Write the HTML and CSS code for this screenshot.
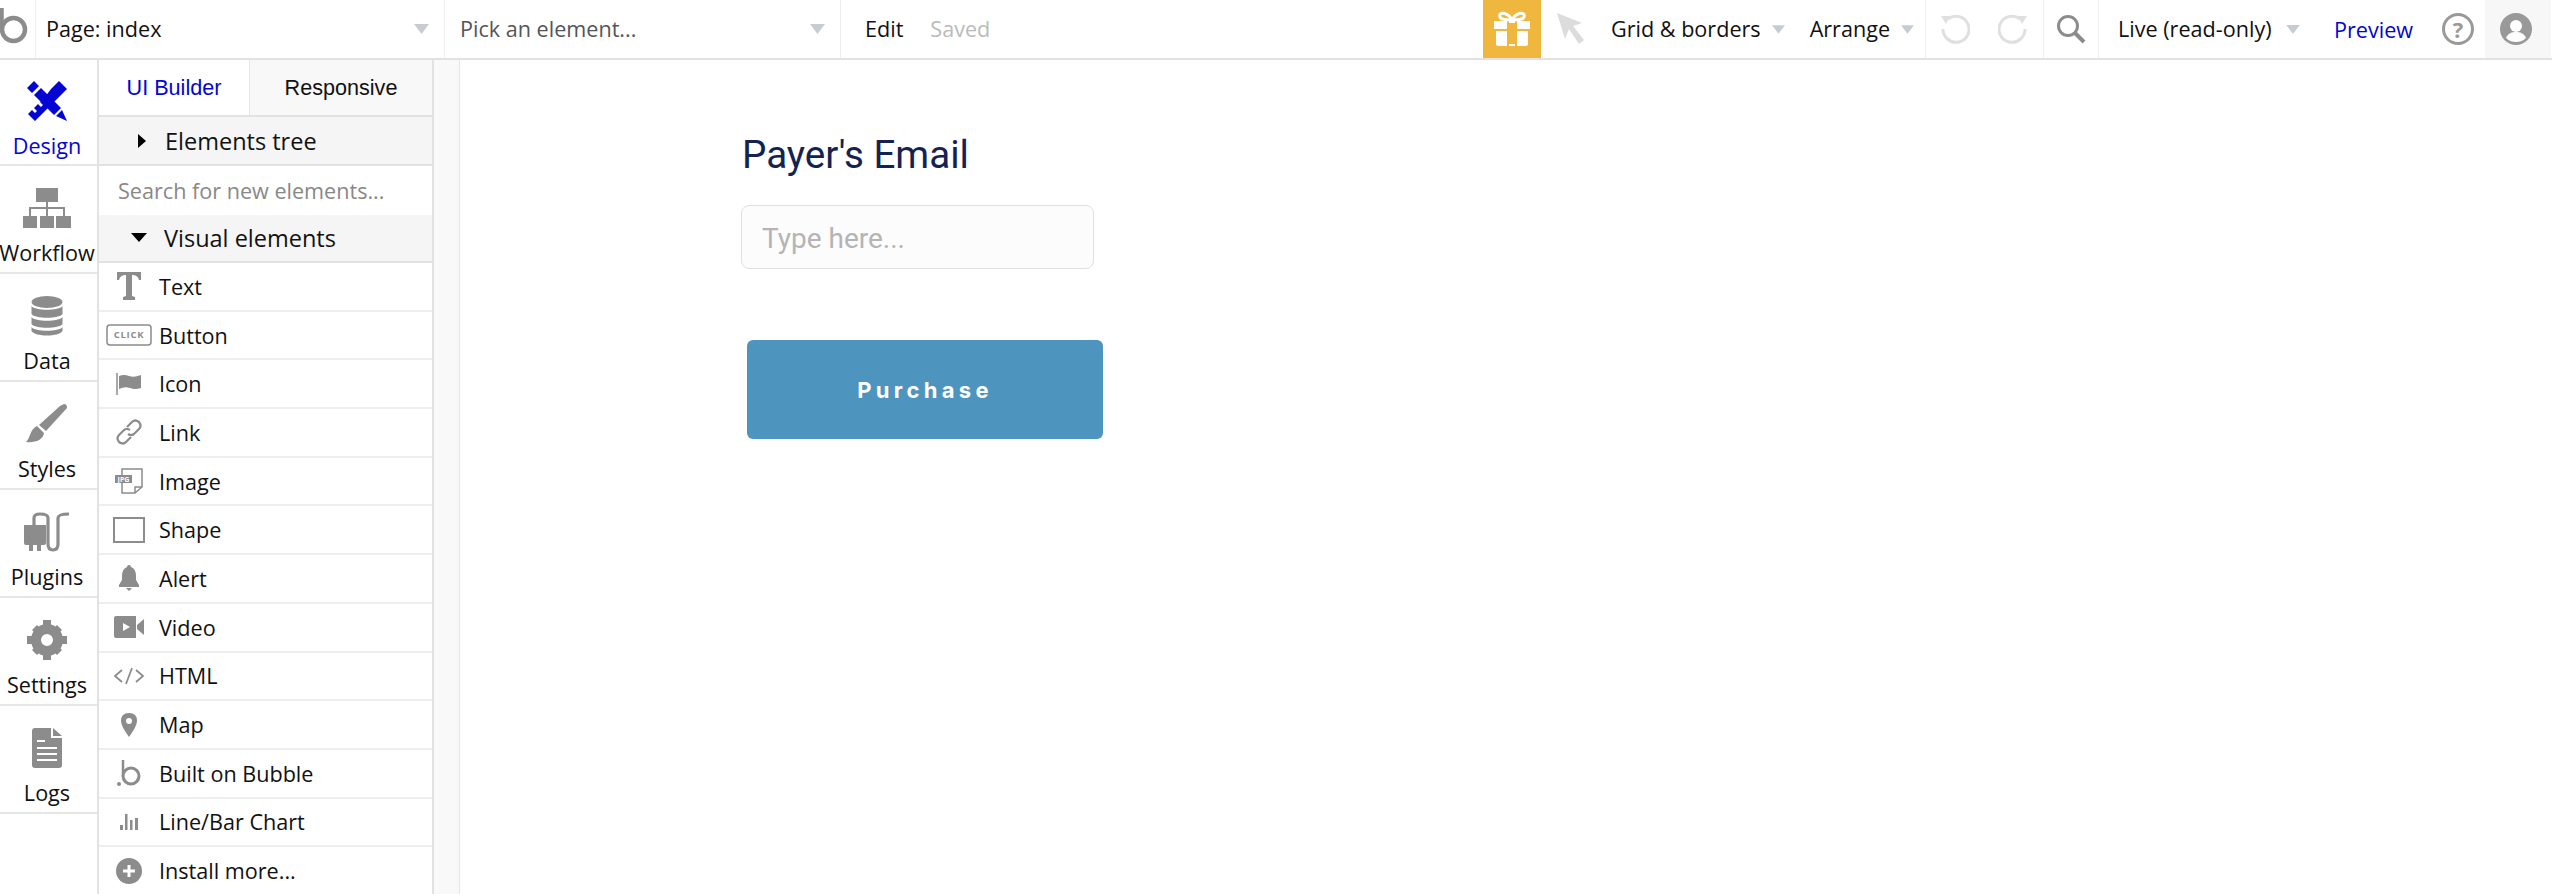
FILE: index.html
```html
<!DOCTYPE html>
<html lang="en">
<head>
<meta charset="utf-8">
<title>Bubble editor</title>
<link rel="stylesheet" href="styles.css">
</head>
<body>
<header class="topbar">
  <div class="tb-logo">
    <svg class="logo-svg" width="35" height="58" viewBox="0 0 35 58"><path d="M1.500 8V30" stroke="#8c8c8c" stroke-width="4.500" fill="none"/><circle cx="13.500" cy="29.5" r="11.500" fill="none" stroke="#8c8c8c" stroke-width="4.500"/></svg>
  </div>
  <div class="tb-sec tb-page"><span>Page: index</span><svg class="caret" width="15" height="10" viewBox="0 0 15 10"><path d="M0 0H15L7.500 10Z"/></svg></div>
  <div class="tb-sec tb-pick"><span>Pick an element...</span><svg class="caret" width="15" height="10" viewBox="0 0 15 10"><path d="M0 0H15L7.500 10Z"/></svg></div>
  <div class="tb-edit"><span>Edit</span><span class="saved">Saved</span></div>
  <div class="tb-gift">
    <svg width="38" height="36" viewBox="0 0 38 36"><path d="M19 9C15 1 5 0 7 6C8 9 13 9 19 9C25 9 30 9 31 6C33 0 23 1 19 9Z" fill="none" stroke="#fff" stroke-width="3"/><path d="M1 10H14V18H1ZM24 10H37V18H24ZM3 20H14V35H5Q3 35 3 33ZM24 20H35V33Q35 35 33 35H24ZM16 10H22V12H16ZM16 33H22V35H16Z" fill="#fff"/></svg>
  </div>
  <div class="tb-tools">
    <svg class="tool-arrow" width="28" height="32" viewBox="0 0 28 32"><path d="M0 0L25 10L16 13L27 27L22 31L12 16L8 26Z" fill="#dcdcdc"/></svg>
    <span class="tool-a">Grid &amp; borders</span><svg class="caret c-a" width="13" height="9" viewBox="0 0 15 10"><path d="M0 0H15L7.500 10Z"/></svg>
    <span class="tool-b">Arrange</span><svg class="caret c-b" width="13" height="9" viewBox="0 0 15 10"><path d="M0 0H15L7.500 10Z"/></svg>
  </div>
  <div class="tb-history">
    <svg width="30" height="30" viewBox="0 0 30 30"><path d="M8 5A13 13 0 1 1 3 15" fill="none" stroke="#dfdfdf" stroke-width="3"/><path d="M1 2L10 2L6 10Z" fill="#dfdfdf"/></svg>
    <svg width="30" height="30" viewBox="0 0 30 30"><path d="M22 5A13 13 0 1 0 27 15" fill="none" stroke="#dfdfdf" stroke-width="3"/><path d="M29 2L20 2L24 10Z" fill="#dfdfdf"/></svg>
  </div>
  <div class="tb-search">
    <svg width="30" height="30" viewBox="0 0 30 30"><circle cx="12" cy="12" r="9.500" fill="none" stroke="#8c8c8c" stroke-width="3"/><path d="M18.500 18.500L28 28" stroke="#8c8c8c" stroke-width="4"/></svg>
  </div>
  <div class="tb-live"><span>Live (read-only)</span><svg class="caret" width="14" height="9" viewBox="0 0 15 10"><path d="M0 0H15L7.500 10Z"/></svg></div>
  <div class="tb-preview">Preview</div>
  <div class="tb-help"><span>?</span></div>
  <div class="tb-user">
    <svg width="32" height="32" viewBox="0 0 32 32"><circle cx="16" cy="16" r="16" fill="#999"/><circle cx="16" cy="13" r="6" fill="#fff"/><path d="M6 25C8 20 12 19 16 19C20 19 24 20 26 25C23 28 19 29 16 29C13 29 9 28 6 25Z" fill="#fff"/></svg>
  </div>
</header>
<main class="body">
  <nav class="rail">
    <div class="rail-item active">
      <div class="rail-icon"><svg width="40" height="40" viewBox="0 0 40 40" fill="#0205d3"><path d="M0 7L7 0L12 5L5 12ZM7 14L14 7L34 27L27 34ZM29 35L35 29L40 40Z"/><path d="M32 0L40 8L8 40L1 33L5 29L8 32L10 30L7 27L11 23L14 26L16 24L13 21L18 16L24 8Z"/></svg></div>
      <span>Design</span>
    </div>
    <div class="rail-item">
      <div class="rail-icon"><svg width="48" height="40" viewBox="0 0 48 40"><path d="M13 0H35V14H13ZM0 28H14V40H0ZM17 28H31V40H17ZM33 28H48V40H33Z" fill="#8c8c8c"/><path d="M24 14V28M7 28V20H41V28" fill="none" stroke="#8c8c8c" stroke-width="2"/></svg></div>
      <span>Workflow</span>
    </div>
    <div class="rail-item">
      <div class="rail-icon"><svg width="32" height="40" viewBox="0 0 32 40" fill="#8c8c8c"><ellipse cx="16" cy="6" rx="15.500" ry="6"/><path d="M0.500 10C4 15 28 15 31.500 10V18C28 23 4 23 0.500 18ZM0.500 21C4 26 28 26 31.500 21V28C28 33 4 33 0.500 28ZM0.500 31C4 36 28 36 31.500 31V35C28 41 4 41 0.500 35Z"/></svg></div>
      <span>Data</span>
    </div>
    <div class="rail-item">
      <div class="rail-icon"><svg width="42" height="40" viewBox="0 0 42 40" fill="#8c8c8c"><path d="M38 0Q41 0 41 4L20 27L13 21L34 2Z"/><path d="M11 22L18 29C17 36 9 39 0 38C4 35 4 25 11 22Z"/></svg></div>
      <span>Styles</span>
    </div>
    <div class="rail-item">
      <div class="rail-icon"><svg width="46" height="40" viewBox="0 0 46 40"><path d="M0 13H22V31Q22 33 20 33H17V39H13V33H9V39H5V33H2Q0 33 0 31Z" fill="#8c8c8c"/><path d="M10 13V6Q10 2 16 2Q24 2 24 6V32Q24 38 29 38Q34 38 34 32V6Q34 2 45 2" fill="none" stroke="#8c8c8c" stroke-width="3.200"/></svg></div>
      <span>Plugins</span>
    </div>
    <div class="rail-item">
      <div class="rail-icon"><svg width="40" height="40" viewBox="0 0 40 40"><circle cx="20" cy="20" r="11" fill="none" stroke="#8c8c8c" stroke-width="10"/><path d="M16 0H24V6H16ZM16 34H24V40H16ZM0 16H6V24H0ZM34 16H40V24H34ZM5 10L10 5L14 9L9 14ZM30 5L35 10L31 14L26 9ZM5 30L10 35L14 31L9 26ZM30 35L35 30L31 26L26 31Z" fill="#8c8c8c"/></svg></div>
      <span>Settings</span>
    </div>
    <div class="rail-item">
      <div class="rail-icon"><svg width="30" height="40" viewBox="0 0 30 40"><path d="M3 0H19V10H30V37Q30 40 27 40H3Q0 40 0 37V3Q0 0 3 0ZM21 0L30 8H21Z" fill="#8c8c8c"/><path d="M5 13H13M5 20H25M5 26H25M5 32H25" stroke="#fff" stroke-width="2"/></svg></div>
      <span>Logs</span>
    </div>
  </nav>
  <aside class="panel">
    <div class="tabs"><div class="tab on">UI Builder</div><div class="tab off">Responsive</div></div>
    <div class="sec-head tree"><svg width="10" height="14" viewBox="0 0 10 14"><path d="M1 0L9 7L1 14Z"/></svg><span>Elements tree</span></div>
    <div class="search">Search for new elements...</div>
    <div class="sec-head visual"><svg width="16" height="10" viewBox="0 0 16 10"><path d="M0 0H16L8 9Z"/></svg><span>Visual elements</span></div>
    <ul class="list">
      <li><span class="ic"><svg width="24" height="28" viewBox="0 0 24 28"><path d="M0 0H24V8H22Q21 3 15 3V24L18 25V28H6V25L9 24V3Q3 3 2 8H0Z" fill="#8c8c8c"/></svg></span>Text</li>
      <li><span class="ic"><svg width="46" height="22" viewBox="0 0 46 22"><rect x="1" y="1" width="44" height="20" rx="3" fill="none" stroke="#8c8c8c" stroke-width="1.500"/></svg><em class="click">CLICK</em></span>Button</li>
      <li><span class="ic"><svg width="26" height="22" viewBox="0 0 26 22"><path d="M1 0V22" stroke="#8c8c8c" stroke-width="1.500"/><path d="M3 3Q8 1 13 3T25 2V15Q19 17 14 15T3 16Z" fill="#8c8c8c"/></svg></span>Icon</li>
      <li><span class="ic"><svg width="26" height="26" viewBox="0 0 26 26" fill="none" stroke="#8c8c8c" stroke-width="2.200"><path d="M11 8L16 3Q19 0 23 3Q26 7 23 10L18 15Q15 17 12 15"/><path d="M15 18L10 23Q7 26 3 23Q0 19 3 16L8 11Q11 9 14 11"/></svg></span>Link</li>
      <li><span class="ic"><svg width="28" height="26" viewBox="0 0 28 26"><path d="M7 7V1H27V19L20 25H7V15M20 25V19H27" fill="none" stroke="#8c8c8c" stroke-width="1.500"/><rect x="0" y="7" width="17" height="8" fill="#8c8c8c"/></svg><em class="jpg">JPG</em></span>Image</li>
      <li><span class="ic"><svg width="32" height="26" viewBox="0 0 32 26"><rect x="1" y="1" width="30" height="24" fill="none" stroke="#8c8c8c" stroke-width="2"/></svg></span>Shape</li>
      <li><span class="ic"><svg width="22" height="26" viewBox="0 0 22 26" fill="#8c8c8c"><path d="M11 0Q13 0 13 2Q18 4 18 11V15L21 20V22H1V20L4 15V11Q4 4 9 2Q9 0 11 0ZM8 23H14L11 26Z"/></svg></span>Alert</li>
      <li><span class="ic"><svg width="30" height="22" viewBox="0 0 30 22"><path d="M2 0H22V22H2Q0 22 0 20V2Q0 0 2 0ZM23 9L30 3V19L23 13Z" fill="#8c8c8c"/><path d="M9 7L16 11L9 15Z" fill="#fff"/></svg></span>Video</li>
      <li><span class="ic"><svg width="32" height="18" viewBox="0 0 32 18" fill="none" stroke="#8c8c8c" stroke-width="1.800"><path d="M9 3L2 9L9 15M23 3L30 9L23 15M19 1L13 17"/></svg></span>HTML</li>
      <li><span class="ic"><svg width="16" height="24" viewBox="0 0 16 24"><path d="M8 0Q16 0 16 8Q16 13 8 24Q0 13 0 8Q0 0 8 0Z" fill="#8c8c8c"/><circle cx="8" cy="8" r="3" fill="#fff"/></svg></span>Map</li>
      <li><span class="ic"><svg width="24" height="26" viewBox="0 0 24 26"><circle cx="2" cy="24" r="2" fill="#8c8c8c"/><path d="M6 0V16" stroke="#8c8c8c" stroke-width="2.500"/><circle cx="14" cy="16" r="8" fill="none" stroke="#8c8c8c" stroke-width="3"/></svg></span>Built on Bubble</li>
      <li><span class="ic"><svg width="18" height="16" viewBox="0 0 18 16" fill="#8c8c8c"><path d="M0 11H3V16H0ZM5 0H7.500V16H5ZM10 6H12.500V16H10ZM15 4H18V16H15Z"/></svg></span>Line/Bar Chart</li>
      <li><span class="ic"><svg width="26" height="26" viewBox="0 0 26 26"><circle cx="13" cy="13" r="13" fill="#8c8c8c"/><path d="M13 7V19M7 13H19" stroke="#fff" stroke-width="3"/></svg></span>Install more...</li>
    </ul>
  </aside>
  <div class="gutter"></div>
  <section class="canvas">
    <div class="c-label">Payer's Email</div>
    <div class="c-input">Type here...</div>
    <div class="c-button">Purchase</div>
  </section>
</main>
</body>
</html>
```
FILE: styles.css
```css
* { box-sizing: border-box; }
html, body { margin: 0; height: 100%; overflow: hidden; background: #fff; }
body { font-family: "Open Sans", sans-serif; font-size: 21.600px; color: #111; display: flex; flex-direction: column; }

.topbar { display: flex; height: 60px; flex: none; border-bottom: 2px solid #e2e2e2; }
.topbar > div { height: 58px; display: flex; align-items: center; }
.topbar span { position: relative; top: -1px; }
.caret { fill: #c6ccd2; flex: none; }
.tb-logo { width: 36px; border-right: 1px solid #eee; }
.logo-svg { display: block; }
.tb-sec { justify-content: space-between; border-right: 1px solid #eee; }
.tb-page { width: 409px; padding: 0 15px 0 10px; }
.tb-pick { width: 396px; padding: 0 15px; color: #555; }
.tb-edit { width: 642px; padding-left: 24px; gap: 27px; }
.saved { color: #bbb; }
.tb-gift { width: 58px; background: #efb73e; justify-content: center; }
.tb-tools { width: 385px; padding-left: 16px; border-right: 1px solid #eee; }
.tool-arrow { margin-right: 26px; }
.c-a { margin: 0 25px 0 11px; }
.c-b { margin-left: 11px; }
.tb-history { width: 118px; padding: 0 15px 0 14px; justify-content: space-between; border-right: 1px solid #eee; }
.tb-search { width: 55px; justify-content: center; border-right: 1px solid #eee; }
.tb-live { width: 235px; padding-left: 19px; gap: 14px; }
.tb-preview { width: 108px; color: #0205d3; }
.tb-help { width: 43px; }
.tb-help span { width: 32px; height: 32px; border: 3px solid #999; border-radius: 50%; color: #999; font-weight: 700; font-size: 22px; line-height: 26px; text-align: center; top: 0; }
.tb-user { width: 66px; background: #f7f7f7; padding-left: 15px; }

.body { flex: 1; display: flex; min-height: 0; }
.rail { width: 99px; flex: none; border-right: 2px solid #e2e2e2; }
.rail-item { height: 108px; border-bottom: 2px solid #e6e6e6; display: flex; flex-direction: column; align-items: center; padding: 22px 3px 0 0; text-align: center; }
.rail-item:first-child { height: 106px; padding-top: 21px; }
.rail-icon { height: 40px; display: flex; align-items: center; justify-content: center; margin-bottom: 11px; }
.rail-icon svg { display: block; }
.rail-item span { line-height: 27px; white-space: nowrap; }
.rail-item.active span { color: #0205d3; }

.panel { width: 335px; flex: none; border-right: 2px solid #e2e2e2; }
.tabs { display: flex; height: 57px; border-bottom: 2px solid #e2e2e2; font-family: "Liberation Sans", Arial, sans-serif; }
.tab { display: flex; align-items: center; justify-content: center; }
.tab.on { width: 150px; color: #0205d3; }
.tab.off { flex: 1; background: #f8f8f8; border-left: 1px solid #e6e6e6; }
.sec-head { display: flex; align-items: center; background: #f5f5f5; height: 49px; font-size: 23.500px; border-bottom: 2px solid #e2e2e2; }
.tree { padding-left: 38px; }
.tree span { margin-left: 18px; }
.visual { padding-left: 32px; height: 48px; }
.visual span { margin-left: 17px; }
.search { height: 49px; padding-left: 19px; display: flex; align-items: center; color: #888; border-bottom: 0; }
.list { list-style: none; margin: 0; padding: 0; }
.list li { height: 48.700px; display: flex; align-items: center; border-bottom: 2px solid #eee; white-space: nowrap; }
.ic { width: 60px; flex: none; display: flex; align-items: center; justify-content: center; position: relative; }
.ic svg { display: block; }
.click { position: absolute; left: 0; right: 0; text-align: center; font: 700 9.500px/1 "Open Sans", sans-serif; color: #8c8c8c; letter-spacing: 0.700px; }
.jpg { position: absolute; left: 16px; top: 8px; width: 17px; text-align: center; font: 700 7px/8px "Open Sans", sans-serif; color: #fff; }

.gutter { width: 26px; flex: none; background: #f9f9f9; border-right: 1px solid #e6e6e6; }
.canvas { flex: 1; position: relative; }
.c-label { position: absolute; left: 282px; top: 72px; font: 400 38.600px/1.2 Roboto, sans-serif; color: #14224f; white-space: nowrap; }
.c-input { position: absolute; left: 281px; top: 145px; width: 353px; height: 64px; background: #fcfcfc; border: 1px solid #e0e0e0; border-radius: 8px; padding: 2px 0 0 20px; display: flex; align-items: center; font: 400 28px Roboto, sans-serif; color: #b4b4b4; }
.c-button { position: absolute; left: 287px; top: 280px; width: 356px; height: 99px; background: #4d95be; border-radius: 6px; display: flex; align-items: center; justify-content: center; color: #fff; font: 700 22px Inter, sans-serif; letter-spacing: 4.300px; }
```
